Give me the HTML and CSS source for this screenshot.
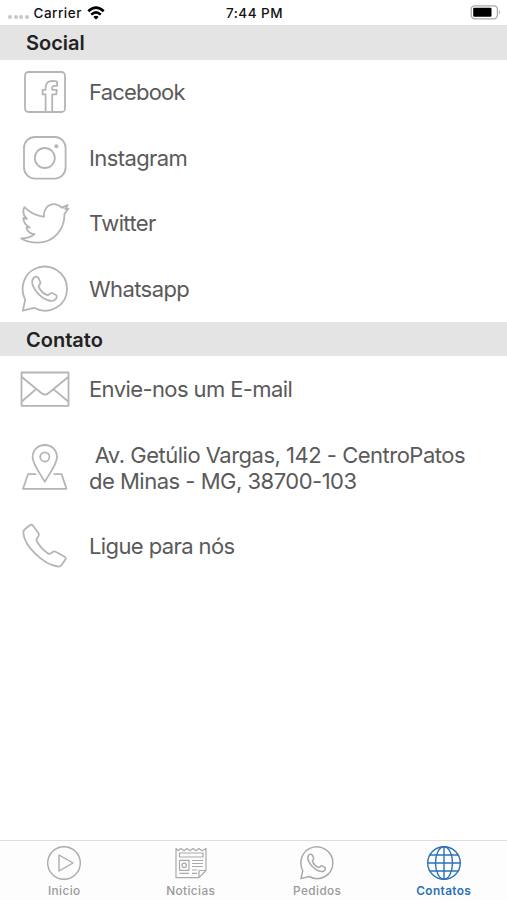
FILE: index.html
```html
<!DOCTYPE html>
<html lang="pt-BR">

<head>
    <meta charset="UTF-8">
    <meta name="viewport" content="width=device-width, initial-scale=1">
    <link rel="stylesheet" href="styles.css">
    <title>Contatos</title>
</head>

<body>
    <svg class="defs" width="0" height="0">
        <symbol id="whatsapp" viewBox="0 0 50 50">
            <path d="M2.8 46.7 L5.2 35.8 C-1.2 23 5 9.2 15 4.7 C30 -1.8 47 8 47 25 C47 41.8 29 52 14 43.8 Z"/>
            <path d="M13.2 14.5 C14.4 12.5 17.2 12 18.5 14 L20.3 18 C21.2 20.2 18.4 21.2 18.7 23 C20.6 27.1 23.2 29.5 27.4 31.2 C29.2 31.7 29.8 28.3 32.1 29 L36 31 C37.7 32.4 36.1 35.5 34.3 36.2 C31 38 26.8 36.1 23.2 33.9 C19.2 31.4 15.5 27.2 13.2 22.4 C11.7 19.1 11.9 16.6 13.2 14.5 Z"/>
        </symbol>
    </svg>

    <div id="wrapper">
        <header class="status">
            <div class="carrier">
                <span class="dots"><i></i><i></i><i></i><i></i></span>
                <span>Carrier</span>
                <svg class="wifi" viewBox="0 0 18 14">
                    <path d="M1.3 5.2 Q9 -1.8 16.7 5.2" stroke-width="2.7"/>
                    <path d="M4.2 8.6 Q9 4.2 13.8 8.6" stroke-width="2.5"/>
                    <path class="full" d="M9 13.6 L6.3 10.9 Q9 8.7 11.7 10.9 Z"/>
                </svg>
            </div>
            <div class="time">7:44 PM</div>
            <div class="power">
                <svg class="battery" viewBox="0 0 31 15">
                    <rect x="1.2" y=".8" width="26.2" height="13" rx="3.5"/>
                    <rect class="full" x="3.2" y="2.8" width="18.3" height="9" rx="1.2"/>
                    <path class="tip" d="M29 5.2 Q31 7.3 29 9.4 Z"/>
                </svg>
            </div>
        </header>

        <main>
            <h2>Social</h2>
            <ul class="list">
                <li>
                    <svg class="icon" viewBox="0 0 50 50">
                        <rect x="5" y="5" width="40" height="40" rx="3.5"/>
                        <path d="M25.6 45 V27.3 H22.6 V22.8 H25.6 V20.5 C25.6 15.8 28.5 14 32.4 14 C34.2 14 35.7 14.1 37.1 14.5 V18.8 H34.4 C32.6 18.8 32.2 19.5 32.2 21 V22.8 H36.9 L36.2 27.3 H32.2 V45"/>
                    </svg>
                    <span class="facebook">Facebook</span>
                </li>
                <li>
                    <svg class="icon" viewBox="0 0 50 50">
                        <rect x="4" y="4" width="41.6" height="41.6" rx="11"/>
                        <circle cx="24.8" cy="25" r="10"/>
                        <circle class="dot" cx="36.3" cy="13.3" r="2"/>
                    </svg>
                    <span>Instagram</span>
                </li>
                <li>
                    <svg class="icon" viewBox="0 0 50 50">
                        <path d="M1.2 40.5 C6.2 40.5 11 39.3 14.5 36.2 C10.5 35.9 7.4 33.5 6.3 29.5 L9.7 29.3 C6 27.6 3.4 24.3 3.4 20 L7 20.8 C3.2 17.3 2.2 13.5 4.4 9.2 C10 14.7 16 18 24 18.8 C23.2 12.3 27.4 6.2 34 6.2 C37 6.2 39.6 7.6 41.7 9.5 L47.6 7 L45.4 11.2 L48.4 10.6 L44.5 15.7 C44.7 31.5 33.6 44.7 17.5 44.7 C11.5 44.7 6 43.4 1.2 40.5 Z M41.7 9.5 L44.6 9.7"/>
                    </svg>
                    <span>Twitter</span>
                </li>
                <li>
                    <svg class="icon"><use href="#whatsapp"/></svg>
                    <span>Whatsapp</span>
                </li>
            </ul>

            <h2>Contato</h2>
            <ul class="list">
                <li>
                    <svg class="icon" viewBox="0 0 50 50">
                        <rect x="1.5" y="8.5" width="47" height="33.3"/>
                        <path d="M1.5 12.8 L21.6 29.3 Q25 32 28.4 29.3 L48.5 12.8 M1.5 37.8 L15.5 25.6 M48.5 37.8 L34 25.6"/>
                    </svg>
                    <span>Envie-nos um E-mail</span>
                </li>
                <li class="tall">
                    <svg class="icon" viewBox="0 0 50 50">
                        <path d="M24.8 39.8 C20.5 32.2 12.6 21.9 12.6 15.2 C12.6 8 18 3 24.8 3 C31.6 3 37 8 37 15.2 C37 21.9 29.1 32.2 24.8 39.8 Z"/>
                        <circle cx="24.8" cy="14.9" r="4.6"/>
                        <path d="M16.3 32.2 H8 L3 46.8 H46.5 L41.6 32.2 H33.6"/>
                    </svg>
                    <span class="address"> Av. Getúlio Vargas, 142 - CentroPatos<br>de Minas - MG, 38700-103</span>
                </li>
                <li>
                    <svg class="icon" viewBox="0 0 50 50">
                        <path d="M4.5 8.5 L9.8 4.2 Q11.7 3 13 4.8 L18.8 12.8 C19.8 15.3 16.4 16.2 16.4 19.2 C18.6 24.2 23.5 29.4 28.4 32.8 C31.7 33.5 32 29.5 35.2 30.5 L44.6 35.7 Q46.5 37 45.2 38.8 L41.6 44 Q40.2 45.8 37.7 45.5 C22.5 43.5 4.5 24.5 3.4 12.3 Q3.1 9.8 4.5 8.5 Z"/>
                    </svg>
                    <span>Ligue para nós</span>
                </li>
            </ul>
        </main>

        <nav class="tabs">
            <a class="tab">
                <svg class="tab-icon" viewBox="0 0 36 36">
                    <circle cx="18" cy="18" r="16.3"/>
                    <path d="M13 10 V26 L27 18 Z"/>
                </svg>
                <span>Inicio</span>
            </a>
            <a class="tab">
                <svg class="tab-icon news" viewBox="0 0 36 36">
                    <path d="M3 3.5 L5 5.7 L8 3.5 L11 5.7 L14 3.5 L17 5.7 L20 3.5 L23 5.7 L26 3.5 L29 5.7 L33 3.5 V25.5 L26 32.7 H3 Z M26 32.7 V25.5 H33"/>
                    <rect x="6.5" y="8" width="23.5" height="4"/>
                    <rect x="6.5" y="15.3" width="9.5" height="10"/>
                    <circle cx="11.2" cy="20.3" r="2.2"/>
                    <path d="M19 15.5 H30 M19 18.5 H30 M19 21.5 H30 M19 25 H24 M6.5 28.3 H16 M19 28.3 H24"/>
                </svg>
                <span>Noticias</span>
            </a>
            <a class="tab">
                <svg class="tab-icon chat"><use href="#whatsapp"/></svg>
                <span>Pedidos</span>
            </a>
            <a class="tab active">
                <svg class="tab-icon" viewBox="0 0 36 36">
                    <circle cx="18" cy="18" r="16.3"/>
                    <ellipse cx="18" cy="18" rx="8.5" ry="16.3"/>
                    <path d="M18 1.7 V34.3 M4 10 H32 M1.7 18 H34.3 M4 26 H32"/>
                </svg>
                <span>Contatos</span>
            </a>
        </nav>
    </div>
</body>

</html>
```
FILE: styles.css
```css
body {
    margin: 0;
    background-color: #fff;
    font-family: Inter, "Liberation Sans", sans-serif;
    color: #5a5a5a;
}

.defs {
    display: block;
}

svg {
    fill: none;
    stroke: #b5b5b5;
    stroke-width: 1.8;
    stroke-linejoin: round;
    flex: none;
}

#wrapper {
    display: flex;
    flex-direction: column;
    height: 900px;
    overflow: hidden;
}

main {
    flex: 1;
}

/* status bar */
.status {
    display: grid;
    grid-template-columns: 1fr auto 1fr;
    align-items: center;
    box-sizing: border-box;
    height: 25.4px;
    padding: 0 6px 0 8px;
    font-size: 13.5px;
    font-weight: 500;
    letter-spacing: 0.5px;
    color: #111;
}

.carrier {
    display: flex;
    align-items: center;
}

.dots {
    display: flex;
    gap: 1.5px;
    margin: 8px 5px 0 0;
}

.dots i {
    width: 4px;
    height: 4px;
    border-radius: 50%;
    background-color: #c8c8c8;
}

.wifi {
    width: 18px;
    height: 14px;
    margin-left: 5px;
    stroke: #000;
}

.full {
    fill: #000;
    stroke: none;
}

.power {
    display: flex;
    justify-content: flex-end;
}

.battery {
    width: 31px;
    height: 15px;
    stroke: #aaa;
    stroke-width: 1.3;
}

.tip {
    fill: #aaa;
    stroke: none;
}

/* list */
h2 {
    box-sizing: border-box;
    height: 34.3px;
    margin: 0;
    padding-left: 26px;
    font-size: 20px;
    font-weight: 600;
    line-height: 36px;
    letter-spacing: 0;
    color: #222;
    background-color: #e4e4e4;
}

.list {
    margin: 0;
    padding: 0;
    list-style: none;
}

.list li {
    display: flex;
    align-items: center;
    gap: 19px;
    height: 65.5px;
    padding-left: 20px;
    font-size: 22px;
    line-height: 26px;
    letter-spacing: -0.6px;
}

.list .tall {
    height: 91.5px;
}

.list span {
    white-space: pre;
}

.list .facebook {
    letter-spacing: -0.8px;
}

.list .address {
    padding-top: 1px;
    letter-spacing: -0.5px;
}

.icon {
    width: 50px;
    height: 50px;
}

.dot {
    fill: #b5b5b5;
    stroke: none;
}

/* tab bar */
.tabs {
    display: flex;
    box-sizing: border-box;
    height: 60px;
    padding-left: 1px;
    border-top: 1px solid #dedede;
    background-color: #fdfdfd;
}

.tab {
    display: flex;
    flex: 1;
    flex-direction: column;
    align-items: center;
    padding-top: 4px;
    font-size: 11.8px;
    font-weight: 500;
    line-height: 16px;
    letter-spacing: 0.4px;
    color: #999;
}

.tab-icon {
    width: 36px;
    height: 36px;
    margin-bottom: 2px;
    stroke-width: 1.4;
    stroke: #aaa;
}

.news {
    stroke-width: 1.2;
}

.chat {
    stroke-width: 2.1;
}

.active {
    font-weight: 600;
    color: #2a71b8;
}

.active .tab-icon {
    stroke: #2a71b8;
}
```
